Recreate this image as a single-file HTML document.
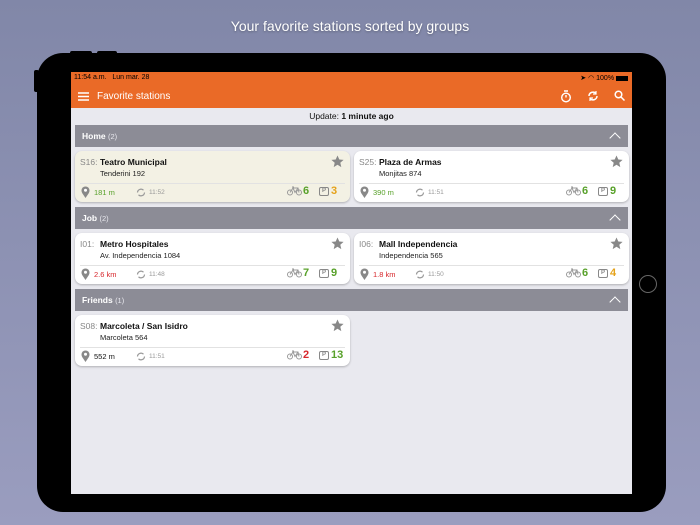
<!DOCTYPE html>
<html><head><meta charset="utf-8"><style>
*{margin:0;padding:0;box-sizing:border-box}
body{width:700px;height:525px;overflow:hidden;background:linear-gradient(#8187a8,#9a9dbf);font-family:"Liberation Sans",sans-serif;position:relative}
.a{position:absolute}
.title{left:0;width:700px;top:18px;text-align:center;color:#fff;font-size:14px;text-shadow:0 1px 2px rgba(0,0,0,.3)}
.dev{left:37px;top:53px;width:629px;height:459px;background:#000;border-radius:26px}
.scr{left:71px;top:72px;width:561px;height:422px;background:#e9e9ef;overflow:hidden}
.sb{left:0;top:0;width:561px;height:12px;background:#ea6a27;font-size:7px;color:#000;padding:2px 3px}
.hd{left:0;top:12px;width:561px;height:24px;background:#ea6a27;color:#fff;font-size:10px}
.upd{left:0;top:39px;width:561px;text-align:center;font-size:8.5px;color:#111}
.grp{left:4px;width:553px;height:22px;background:#8c8c96;color:#fff;font-size:8.5px;font-weight:bold;padding:6px 7px}
.grp span{font-weight:normal;color:#e8e8ee;font-size:7.5px}
.grp i{position:absolute;right:9px;top:9px;width:8px;height:8px;border-left:1.5px solid #fff;border-top:1.5px solid #fff;transform:rotate(45deg)}
.card{width:275px;height:51px;background:#fff;border-radius:7px;box-shadow:0 1px 2px rgba(0,0,0,.25);font-size:8.5px}
.card.y{background:#f3f1e4}
.code{left:5px;top:6px;color:#888}
.nm{left:25px;top:6px;font-weight:bold;color:#111}
.ad{left:25px;top:18px;font-size:7.5px;color:#222}
.ln{left:5px;right:5px;top:32px;border-top:1px solid #e2e2e2}
.ds{left:19px;top:37px;font-size:7.5px}
.tm{left:74px;top:38px;font-size:6.5px;color:#999}
.bk{left:212px;top:35px}
.bn{left:228px;top:34px;font-size:11px;font-weight:bold}
.pb{left:244px;top:36px;width:10px;height:9px;border:1px solid #888;border-radius:2px;font-size:6px;color:#888;text-align:center;line-height:7px;font-weight:bold}
.pn{left:256px;top:34px;font-size:11px;font-weight:bold}
.g{color:#58a12a}.r{color:#d7262b}.o{color:#e5a21a}.k{color:#111}
</style></head><body>
<div class="a title">Your favorite stations sorted by groups</div>
<div class="a" style="left:70px;top:51px;width:22px;height:4px;background:#000;border-radius:2px"></div>
<div class="a" style="left:97px;top:51px;width:20px;height:4px;background:#000;border-radius:2px"></div>
<div class="a" style="left:34px;top:70px;width:5px;height:22px;background:#000;border-radius:2px"></div>
<div class="a dev"></div>
<div class="a" style="left:639px;top:275px;width:18px;height:18px;border:1px solid #666;border-radius:50%"></div>
<div class="a scr">
 <div class="a sb">11:54 a.m.&nbsp;&nbsp; Lun mar. 28<span style="position:absolute;right:4px;top:2px">➤ ◠ 100% <span style="display:inline-block;width:12px;height:5px;background:#000;vertical-align:middle"></span></span></div>
 <div class="a hd">
  <svg class="a" style="left:7px;top:8px" width="11" height="9"><path d="M0 1h11M0 4.5h11M0 8h11" stroke="#fff" stroke-width="1.4"/></svg>
  <div class="a" style="left:26px;top:7px">Favorite stations</div>
  <svg class="a" style="left:489px;top:6px" width="12" height="13" fill="none" stroke="#fff" stroke-width="1.4"><circle cx="6" cy="7.5" r="4.3"/><path d="M4 1h4M6 7.5V5"/></svg>
  <svg class="a" style="left:516px;top:6px" width="12" height="12" fill="none" stroke="#fff" stroke-width="1.5"><path d="M2 6a4 4 0 0 1 7-2.5M10 6a4 4 0 0 1-7 2.5"/><path d="M9 1v3H6M3 11V8h3" stroke-width="1.2"/></svg>
  <svg class="a" style="left:543px;top:6px" width="11" height="11" fill="none" stroke="#fff" stroke-width="1.5"><circle cx="4.5" cy="4.5" r="3.3"/><path d="M7 7l3.5 3.5"/></svg>
 </div>
 <div class="a upd">Update: <b>1 minute ago</b></div>

 <div class="a grp" style="top:53px">Home <span>(2)</span><i></i></div>
 <div class="a grp" style="top:135px">Job <span>(2)</span><i></i></div>
 <div class="a grp" style="top:217px">Friends <span>(1)</span><i></i></div>
</div>

<script>
const cards=[
[75,151,'y','S16:','Teatro Municipal','Tenderini 192','181 m','g','11:52','6','g','3','o'],
[354,151,'','S25:','Plaza de Armas','Monjitas 874','390 m','g','11:51','6','g','9','g'],
[75,233,'','I01:','Metro Hospitales','Av. Independencia 1084','2.6 km','r','11:48','7','g','9','g'],
[354,233,'','I06:','Mall Independencia','Independencia 565','1.8 km','r','11:50','6','g','4','o'],
[75,315,'','S08:','Marcoleta / San Isidro','Marcoleta 564','552 m','k','11:51','2','r','13','g']];
let h='';
for(const c of cards){h+=`<div class="a card ${c[2]}" style="left:${c[0]}px;top:${c[1]}px">
<div class="a code">${c[3]}</div><div class="a nm">${c[4]}</div><div class="a ad">${c[5]}</div>
<svg class="a" style="left:256px;top:4px" width="13" height="13"><path d="M6.5 0.5l1.8 4 4.3.4-3.3 2.9 1 4.3-3.8-2.3-3.8 2.3 1-4.3L.4 4.9l4.3-.4z" fill="#888"/></svg>
<div class="a ln"></div>
<svg class="a" style="left:6px;top:35px" width="9" height="12"><path d="M4.5 12C1 7 0.5 6 0.5 4.5a4 4 0 0 1 8 0C8.5 6 8 7 4.5 12z" fill="#888"/><circle cx="4.5" cy="4.3" r="1.5" fill="#fff"/></svg>
<div class="a ds ${c[7]}">${c[6]}</div>
<svg class="a" style="left:61px;top:37px" width="10" height="9" fill="none" stroke="#999" stroke-width="1.2"><path d="M1.5 4.5a3.5 3.5 0 0 1 6-2.3M8.5 4.5a3.5 3.5 0 0 1-6 2.3"/></svg>
<div class="a tm">${c[8]}</div>
<svg class="a bk" width="15" height="10" fill="none" stroke="#999" stroke-width="1"><circle cx="3" cy="6.5" r="2.5"/><circle cx="12" cy="6.5" r="2.5"/><path d="M3 6.5L6 2h5l1 4.5M6 2l2 4.5 3-4.5M5 1h2"/></svg>
<div class="a bn ${c[10]}">${c[9]}</div>
<div class="a pb">P</div><div class="a pn ${c[12]}">${c[11]}</div></div>`}
document.body.insertAdjacentHTML('beforeend',h);
</script>
</body></html>
